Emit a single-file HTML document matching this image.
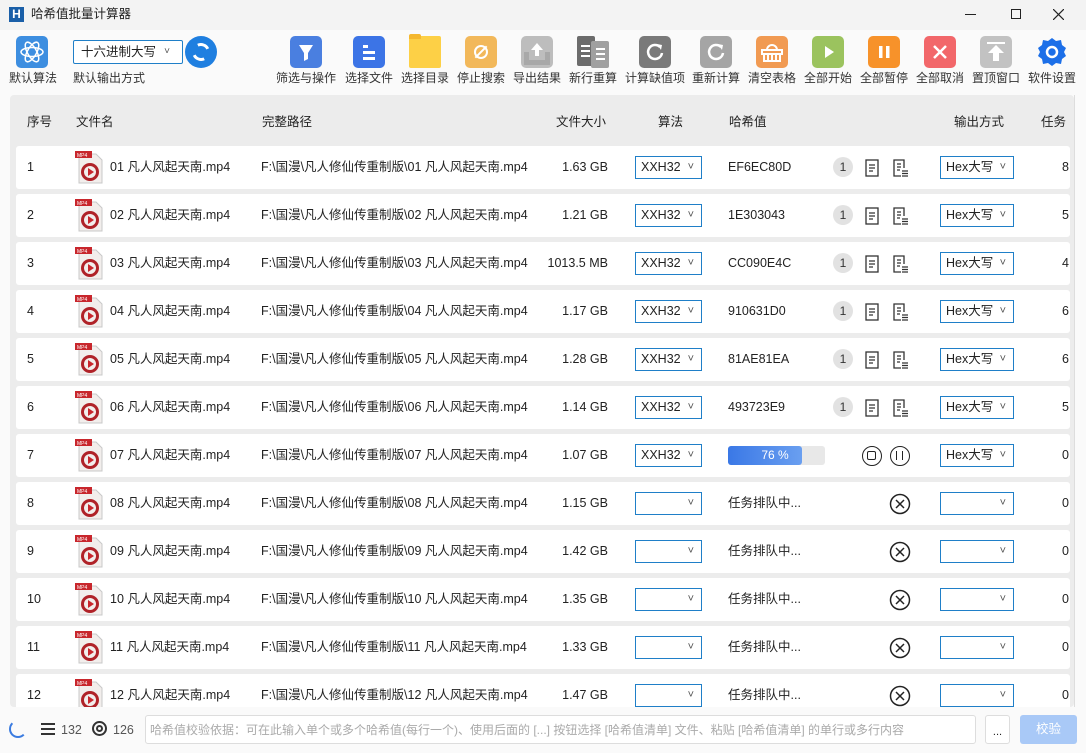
<!DOCTYPE html>
<html><head><meta charset="utf-8">
<style>
*{margin:0;padding:0;box-sizing:border-box}
body{width:1086px;height:753px;overflow:hidden;background:#fafafa;font-family:"Liberation Sans","Noto Sans CJK SC",sans-serif;font-size:12.5px;color:#222;position:relative;line-height:16px}
.abs{position:absolute}
.title{left:0;top:0;width:1086px;height:30px;background:#f3f3f3}
.tb{position:absolute;top:36px;width:32px;height:32px;border-radius:5px}
.tl{position:absolute;top:70px;font-size:12px;color:#333;white-space:nowrap;transform:translateX(-50%)}
.panel{left:10px;top:95px;width:1064px;height:612px;background:#ececec;border-radius:4px;overflow:hidden}
.hdr{position:absolute;top:19px;font-size:12.5px;color:#222}
.row{position:absolute;left:6px;width:1054px;height:43px;background:#fff;border-radius:3px}
.row span{position:absolute;top:13px;white-space:nowrap;font-size:12.5px;line-height:16px}
.sel{position:absolute;top:10px;height:23px;border:1px solid #1f7fc8;background:#fff;font-size:12.5px;padding:2px 0 0 5px;line-height:16px}
.sel:after{content:"˅";position:absolute;right:7px;top:2px;font-size:11px;color:#555}
.fi{position:absolute;left:59px;top:5px;width:29px;height:33px}
.badge{position:absolute;left:817px;top:11px;width:20px;height:20px;border-radius:10px;background:#e2e2e2;font-size:12px;text-align:center;line-height:20px;color:#333}
.doc{position:absolute;top:13px}
</style></head><body>
<div class="abs title"></div>
<div class="abs" style="left:9px;top:7px;width:15px;height:15px;background:#1a5fa8;color:#fff;font-weight:bold;font-size:12px;text-align:center;line-height:15px">H</div>
<div class="abs" style="left:31px;top:6px;font-size:12.5px">哈希值批量计算器</div>
<div class="abs" style="left:965px;top:14px;width:11px;height:1px;background:#222"></div>
<div class="abs" style="left:1011px;top:9px;width:10px;height:10px;border:1px solid #222"></div>
<svg class="abs" style="left:1053px;top:9px" width="11" height="11" stroke="#222" stroke-width="1.2"><path d="M0 0l11 11M11 0L0 11"/></svg>

<div class="tb" style="left:16px;background:#3d8ee0"><svg width="32" height="32"><g fill="none" stroke="#fff" stroke-width="1.5"><ellipse cx="16" cy="16" rx="11" ry="4.5"/><ellipse cx="16" cy="16" rx="11" ry="4.5" transform="rotate(60 16 16)"/><ellipse cx="16" cy="16" rx="11" ry="4.5" transform="rotate(120 16 16)"/></g></svg></div>
<div class="tl" style="left:33px">默认算法</div>
<div class="abs" style="left:73px;top:40px;width:110px;height:24px;border:1.5px solid #1f7fc8;border-radius:2px;background:#fff;padding:3px 0 0 7px;font-size:12.5px">十六进制大写<span style="position:absolute;right:12px;top:3px;font-size:10px;color:#555">˅</span></div>
<div class="tl" style="left:109px">默认输出方式</div>
<div class="abs" style="left:185px;top:36px;width:32px;height:32px;border-radius:16px;background:#1f7fe0"><div style="position:absolute;left:7px;top:7px;width:18px;height:18px;border-radius:9px;border:3px solid #fff;border-left-color:transparent;border-right-color:transparent;transform:rotate(20deg)"></div></div>
<div class="tb" style="left:290px;background:#4a7fe0"><svg width="32" height="32"><path d="M9 9h14l-5 8v6l-4 2v-8z" fill="#fff"/></svg></div><div class="tl" style="left:306px">筛选与操作</div>
<div class="tb" style="left:353px;background:#3c74e6"><svg width="32" height="32" fill="#fff"><rect x="10" y="9" width="5" height="3"/><rect x="10" y="15" width="12" height="3"/><rect x="10" y="21" width="12" height="3"/></svg></div><div class="tl" style="left:369px">选择文件</div>
<div class="tb" style="left:409px;background:#fdd046;border-radius:2px"><div style="position:absolute;left:0;top:-2px;width:12px;height:5px;background:#f5b830;border-radius:2px 2px 0 0"></div></div><div class="tl" style="left:425px">选择目录</div>
<div class="tb" style="left:465px;background:#f2b85a"><div style="position:absolute;left:9px;top:9px;width:14px;height:14px;border:2px solid #fff;border-radius:7px"></div><div style="position:absolute;left:15px;top:8px;width:2px;height:16px;background:#fff;transform:rotate(45deg)"></div></div><div class="tl" style="left:481px">停止搜索</div>
<div class="tb" style="left:521px;background:#bdbdbd"><svg width="32" height="32"><path d="M16 7l-6 7h4v6h4v-6h4z" fill="#fff"/><path d="M3 16h5v8h16v-8h5v13H3z" fill="#a8a8a8"/></svg></div><div class="tl" style="left:537px">导出结果</div>
<div class="tb" style="left:577px;background:transparent"><div style="position:absolute;left:0;top:0;width:18px;height:30px;background:#6c6c6c;border-radius:2px"></div><div style="position:absolute;left:14px;top:5px;width:18px;height:27px;background:#a0a0a0;border-radius:2px"></div><svg class="abs" width="32" height="32" style="left:0;top:0" stroke="#fff" stroke-width="2"><path d="M4 10h9M4 15h9M4 20h9M19 13h9M19 18h9M19 23h9"/></svg></div><div class="tl" style="left:593px">新行重算</div>
<div class="tb" style="left:639px;background:#7a7a7a"><svg width="32" height="32"><path d="M21 11a7 7 0 1 0 2 6" fill="none" stroke="#fff" stroke-width="2.5"/><path d="M18 8l5 1-1 5z" fill="#fff"/></svg></div><div class="tl" style="left:655px">计算缺值项</div>
<div class="tb" style="left:700px;background:#a5a5a5"><svg width="32" height="32"><path d="M21 11a7 7 0 1 0 2 6" fill="none" stroke="#fff" stroke-width="2.5"/><path d="M18 8l5 1-1 5z" fill="#fff"/></svg></div><div class="tl" style="left:716px">重新计算</div>
<div class="tb" style="left:756px;background:#f19a52"><svg width="32" height="32" fill="none" stroke="#fff" stroke-width="2"><rect x="6" y="14" width="20" height="4"/><path d="M8 18v7h16v-7M12 19v5M16 19v5M20 19v5M11 14a5 5 0 0 1 10 0"/></svg></div><div class="tl" style="left:772px">清空表格</div>
<div class="tb" style="left:812px;background:#9bc35e"><svg width="32" height="32"><path d="M13 10l9 6-9 6z" fill="#fff"/></svg></div><div class="tl" style="left:828px">全部开始</div>
<div class="tb" style="left:868px;background:#f7922a"><svg width="32" height="32" fill="#fff"><rect x="11" y="10" width="3.5" height="12"/><rect x="18" y="10" width="3.5" height="12"/></svg></div><div class="tl" style="left:884px">全部暂停</div>
<div class="tb" style="left:924px;background:#f2676a"><svg width="32" height="32" stroke="#fff" stroke-width="2.5"><path d="M10 10l12 12M22 10L10 22"/></svg></div><div class="tl" style="left:940px">全部取消</div>
<div class="tb" style="left:980px;background:#c2c2c2"><svg width="32" height="32" fill="#fff"><rect x="7" y="6" width="18" height="2"/><path d="M16 9l-8 8h5v8h6v-8h5z"/></svg></div><div class="tl" style="left:996px">置顶窗口</div>
<div class="tb" style="left:1036px;background:transparent"><svg width="32" height="32"><path d="M16 2l4 3 5-1 1 5 4 3-2 4 2 4-4 3-1 5-5-1-4 3-4-3-5 1-1-5-4-3 2-4-2-4 4-3 1-5 5 1z" fill="#1c6fe8"/><circle cx="16" cy="16" r="5" fill="none" stroke="#fff" stroke-width="2.5"/></svg></div><div class="tl" style="left:1052px">软件设置</div>

<div class="abs panel">
<div class="hdr" style="left:17px">序号</div>
<div class="hdr" style="left:66px">文件名</div>
<div class="hdr" style="left:252px">完整路径</div>
<div class="hdr" style="left:546px">文件大小</div>
<div class="hdr" style="left:648px">算法</div>
<div class="hdr" style="left:719px">哈希值</div>
<div class="hdr" style="left:944px">输出方式</div>
<div class="hdr" style="left:1031px">任务</div>
</div>
<div class="abs" style="left:1074px;top:95px;width:1px;height:612px;background:#ddd"></div>

<div class="abs" style="left:9px;top:720px;width:18px;height:18px;border-radius:9px;border:2px solid #3a7be0;border-right-color:transparent;border-top-color:transparent"></div>
<div class="abs" style="left:41px;top:723px;width:14px;height:12px;border-top:2px solid #333;border-bottom:2px solid #333"><div style="margin-top:3px;height:2px;background:#333"></div></div>
<div class="abs" style="left:61px;top:722px;color:#555">132</div>
<div class="abs" style="left:92px;top:721px;width:15px;height:15px;border:2px solid #333;border-radius:8px"><div style="margin:2px;width:7px;height:7px;border:2px solid #333;border-radius:4px"></div></div>
<div class="abs" style="left:113px;top:722px;color:#555">126</div>
<div class="abs" style="left:145px;top:715px;width:831px;height:29px;border:1px solid #ddd;border-radius:3px;background:#fff;color:#aaa;font-size:12px;padding:6px 0 0 4px;white-space:nowrap;overflow:hidden">哈希值校验依据：可在此输入单个或多个哈希值(每行一个)、使用后面的 [...] 按钮选择 [哈希值清单] 文件、粘贴 [哈希值清单] 的单行或多行内容</div>
<div class="abs" style="left:985px;top:715px;width:25px;height:29px;border:1px solid #ddd;border-radius:3px;background:#fff;text-align:center;font-size:11px;padding-top:8px">...</div>
<div class="abs" style="left:1020px;top:715px;width:57px;height:29px;border-radius:3px;background:#a9c9f7;color:#fff;text-align:center;padding-top:6px">校验</div>

<svg width="0" height="0" style="position:absolute"><defs>
<symbol id="f" viewBox="0 0 29 33"><path d="M4 3h17l6 6v23H4z" fill="#f2eeec" stroke="#c8c8c8"/><rect x="0" y="0" width="17" height="7" fill="#c8262c"/><text x="2" y="6" font-size="5" fill="#fff" font-family="Liberation Sans">MP4</text><circle cx="15" cy="21" r="9" fill="#b02228"/><circle cx="15" cy="21" r="6" fill="#f2eeec"/><path d="M13 17v8l6-4z" fill="#c8262c"/></symbol>
<symbol id="d1" viewBox="0 0 16 18"><rect x="2" y="1" width="12" height="16" fill="none" stroke="#333" stroke-width="1.3"/><path d="M5 6h6M5 9h6M5 12h4" stroke="#333" stroke-width="1.3"/></symbol>
<symbol id="d2" viewBox="0 0 16 18"><path d="M12 9V1H2v16h7" fill="none" stroke="#333" stroke-width="1.3"/><path d="M5 5h4M5 8h4M5 11h3M10 12h6M10 14.5h6M10 17h6" stroke="#333" stroke-width="1.3"/></symbol>
<symbol id="x" viewBox="0 0 22 22"><circle cx="11" cy="11" r="9.5" fill="none" stroke="#222" stroke-width="1.5"/><path d="M7 7l8 8M15 7l-8 8" stroke="#222" stroke-width="1.5"/></symbol>
</defs></svg>

<div class="abs panel" style="background:transparent">
<div class="row" style="top:51px"><span style="left:11px">1</span><svg class="fi"><use href="#f"/></svg><span style="left:94px">01 凡人风起天南.mp4</span><span style="left:245px">F:\国漫\凡人修仙传重制版\01 凡人风起天南.mp4</span><span style="left:532px;width:60px;text-align:right">1.63 GB</span><div class="sel" style="left:619px;width:67px">XXH32</div><span style="left:712px">EF6EC80D</span><div class="badge">1</div><svg class="doc" style="left:848px" width="16" height="18"><use href="#d1"/></svg><svg class="doc" style="left:876px" width="16" height="18"><use href="#d2"/></svg><div class="sel" style="left:924px;width:74px">Hex大写</div><span style="left:1046px">8</span></div>
<div class="row" style="top:99px"><span style="left:11px">2</span><svg class="fi"><use href="#f"/></svg><span style="left:94px">02 凡人风起天南.mp4</span><span style="left:245px">F:\国漫\凡人修仙传重制版\02 凡人风起天南.mp4</span><span style="left:532px;width:60px;text-align:right">1.21 GB</span><div class="sel" style="left:619px;width:67px">XXH32</div><span style="left:712px">1E303043</span><div class="badge">1</div><svg class="doc" style="left:848px" width="16" height="18"><use href="#d1"/></svg><svg class="doc" style="left:876px" width="16" height="18"><use href="#d2"/></svg><div class="sel" style="left:924px;width:74px">Hex大写</div><span style="left:1046px">5</span></div>
<div class="row" style="top:147px"><span style="left:11px">3</span><svg class="fi"><use href="#f"/></svg><span style="left:94px">03 凡人风起天南.mp4</span><span style="left:245px">F:\国漫\凡人修仙传重制版\03 凡人风起天南.mp4</span><span style="left:522px;width:70px;text-align:right">1013.5 MB</span><div class="sel" style="left:619px;width:67px">XXH32</div><span style="left:712px">CC090E4C</span><div class="badge">1</div><svg class="doc" style="left:848px" width="16" height="18"><use href="#d1"/></svg><svg class="doc" style="left:876px" width="16" height="18"><use href="#d2"/></svg><div class="sel" style="left:924px;width:74px">Hex大写</div><span style="left:1046px">4</span></div>
<div class="row" style="top:195px"><span style="left:11px">4</span><svg class="fi"><use href="#f"/></svg><span style="left:94px">04 凡人风起天南.mp4</span><span style="left:245px">F:\国漫\凡人修仙传重制版\04 凡人风起天南.mp4</span><span style="left:532px;width:60px;text-align:right">1.17 GB</span><div class="sel" style="left:619px;width:67px">XXH32</div><span style="left:712px">910631D0</span><div class="badge">1</div><svg class="doc" style="left:848px" width="16" height="18"><use href="#d1"/></svg><svg class="doc" style="left:876px" width="16" height="18"><use href="#d2"/></svg><div class="sel" style="left:924px;width:74px">Hex大写</div><span style="left:1046px">6</span></div>
<div class="row" style="top:243px"><span style="left:11px">5</span><svg class="fi"><use href="#f"/></svg><span style="left:94px">05 凡人风起天南.mp4</span><span style="left:245px">F:\国漫\凡人修仙传重制版\05 凡人风起天南.mp4</span><span style="left:532px;width:60px;text-align:right">1.28 GB</span><div class="sel" style="left:619px;width:67px">XXH32</div><span style="left:712px">81AE81EA</span><div class="badge">1</div><svg class="doc" style="left:848px" width="16" height="18"><use href="#d1"/></svg><svg class="doc" style="left:876px" width="16" height="18"><use href="#d2"/></svg><div class="sel" style="left:924px;width:74px">Hex大写</div><span style="left:1046px">6</span></div>
<div class="row" style="top:291px"><span style="left:11px">6</span><svg class="fi"><use href="#f"/></svg><span style="left:94px">06 凡人风起天南.mp4</span><span style="left:245px">F:\国漫\凡人修仙传重制版\06 凡人风起天南.mp4</span><span style="left:532px;width:60px;text-align:right">1.14 GB</span><div class="sel" style="left:619px;width:67px">XXH32</div><span style="left:712px">493723E9</span><div class="badge">1</div><svg class="doc" style="left:848px" width="16" height="18"><use href="#d1"/></svg><svg class="doc" style="left:876px" width="16" height="18"><use href="#d2"/></svg><div class="sel" style="left:924px;width:74px">Hex大写</div><span style="left:1046px">5</span></div>
<div class="row" style="top:339px"><span style="left:11px">7</span><svg class="fi"><use href="#f"/></svg><span style="left:94px">07 凡人风起天南.mp4</span><span style="left:245px">F:\国漫\凡人修仙传重制版\07 凡人风起天南.mp4</span><span style="left:532px;width:60px;text-align:right">1.07 GB</span><div class="sel" style="left:619px;width:67px">XXH32</div><div style="position:absolute;left:712px;top:12px;width:97px;height:19px;background:#e8e8e8;border-radius:3px"><div style="width:74px;height:19px;background:linear-gradient(90deg,#3a78e6,#6a9ff0);border-radius:3px;color:#fff;font-size:12px;text-align:center;line-height:19px;padding-left:20px">76 %</div></div><div style="position:absolute;left:846px;top:12px;width:20px;height:20px;border:1.5px solid #222;border-radius:10px"><div style="margin:4px;width:9px;height:9px;border:1.5px solid #222;border-radius:2px"></div></div><div style="position:absolute;left:874px;top:12px;width:20px;height:20px;border:1.5px solid #222;border-radius:10px"><div style="position:absolute;left:5px;top:4px;width:7px;height:9px;border-left:1.5px solid #222;border-right:1.5px solid #222"></div></div><div class="sel" style="left:924px;width:74px">Hex大写</div><span style="left:1046px">0</span></div>
<div class="row" style="top:387px"><span style="left:11px">8</span><svg class="fi"><use href="#f"/></svg><span style="left:94px">08 凡人风起天南.mp4</span><span style="left:245px">F:\国漫\凡人修仙传重制版\08 凡人风起天南.mp4</span><span style="left:532px;width:60px;text-align:right">1.15 GB</span><div class="sel" style="left:619px;width:67px"></div><span style="left:712px">任务排队中...</span><svg style="position:absolute;left:873px;top:11px" width="22" height="22"><use href="#x"/></svg><div class="sel" style="left:924px;width:74px"></div><span style="left:1046px">0</span></div>
<div class="row" style="top:435px"><span style="left:11px">9</span><svg class="fi"><use href="#f"/></svg><span style="left:94px">09 凡人风起天南.mp4</span><span style="left:245px">F:\国漫\凡人修仙传重制版\09 凡人风起天南.mp4</span><span style="left:532px;width:60px;text-align:right">1.42 GB</span><div class="sel" style="left:619px;width:67px"></div><span style="left:712px">任务排队中...</span><svg style="position:absolute;left:873px;top:11px" width="22" height="22"><use href="#x"/></svg><div class="sel" style="left:924px;width:74px"></div><span style="left:1046px">0</span></div>
<div class="row" style="top:483px"><span style="left:11px">10</span><svg class="fi"><use href="#f"/></svg><span style="left:94px">10 凡人风起天南.mp4</span><span style="left:245px">F:\国漫\凡人修仙传重制版\10 凡人风起天南.mp4</span><span style="left:532px;width:60px;text-align:right">1.35 GB</span><div class="sel" style="left:619px;width:67px"></div><span style="left:712px">任务排队中...</span><svg style="position:absolute;left:873px;top:11px" width="22" height="22"><use href="#x"/></svg><div class="sel" style="left:924px;width:74px"></div><span style="left:1046px">0</span></div>
<div class="row" style="top:531px"><span style="left:11px">11</span><svg class="fi"><use href="#f"/></svg><span style="left:94px">11 凡人风起天南.mp4</span><span style="left:245px">F:\国漫\凡人修仙传重制版\11 凡人风起天南.mp4</span><span style="left:532px;width:60px;text-align:right">1.33 GB</span><div class="sel" style="left:619px;width:67px"></div><span style="left:712px">任务排队中...</span><svg style="position:absolute;left:873px;top:11px" width="22" height="22"><use href="#x"/></svg><div class="sel" style="left:924px;width:74px"></div><span style="left:1046px">0</span></div>
<div class="row" style="top:579px"><span style="left:11px">12</span><svg class="fi"><use href="#f"/></svg><span style="left:94px">12 凡人风起天南.mp4</span><span style="left:245px">F:\国漫\凡人修仙传重制版\12 凡人风起天南.mp4</span><span style="left:532px;width:60px;text-align:right">1.47 GB</span><div class="sel" style="left:619px;width:67px"></div><span style="left:712px">任务排队中...</span><svg style="position:absolute;left:873px;top:11px" width="22" height="22"><use href="#x"/></svg><div class="sel" style="left:924px;width:74px"></div><span style="left:1046px">0</span></div>
</div>
</body></html>
